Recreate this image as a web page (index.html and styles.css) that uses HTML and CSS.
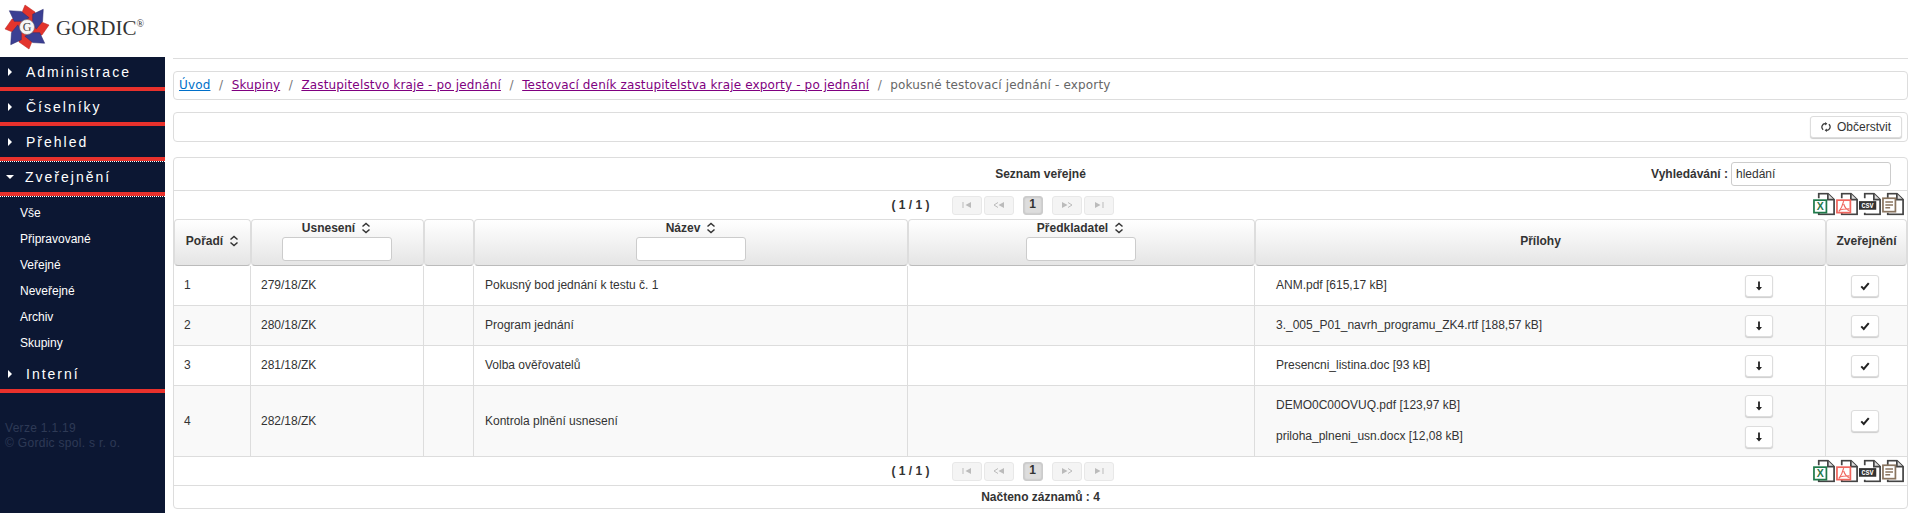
FILE: index.html
```html
<!DOCTYPE html>
<html lang="cs">
<head>
<meta charset="utf-8">
<title>Gordic</title>
<link rel="stylesheet" href="styles.css">
</head>
<body>
<svg class="defs" aria-hidden="true">
  <symbol id="i-sort" viewBox="0 0 10 12"><path d="M1.500 4.500 5 1.500l3.500 3M1.500 7.500 5 10.500l3.500-3" fill="none" stroke="#333" stroke-width="1.500"/></symbol>
  <symbol id="i-refresh" viewBox="0 0 12 12"><path d="M2.600 9.200A4 4 0 0 1 5.500 2.100M9.400 2.800A4 4 0 0 1 6.500 9.900" fill="none" stroke="#333" stroke-width="1.500"/><path d="M5 0 7.600 2.200 5 4.200zM7 12 4.400 9.800 7 7.800z" fill="#333"/></symbol>
  <symbol id="i-down" viewBox="0 0 10 12"><path d="M5 1.500v6" stroke="#222" stroke-width="1.800" fill="none"/><path d="M2 7h6L5 10.500z" fill="#222"/></symbol>
  <symbol id="i-check" viewBox="0 0 12 12"><path d="M1.500 6.500 4.500 9.500 10.500 2.500" stroke="#222" stroke-width="2.400" fill="none"/></symbol>
  <symbol id="i-first" viewBox="0 0 12 8"><path d="M2 1v6" stroke="#bbb" fill="none"/><path d="M10 1v6L4.500 4z" fill="#bbb"/></symbol>
  <symbol id="i-prev" viewBox="0 0 12 8"><path d="M5 1.500 1 4l4 2.500" stroke="#bbb" fill="none"/><path d="M11 1v6L5.500 4z" fill="#bbb"/></symbol>
  <symbol id="i-next" viewBox="0 0 12 8"><path d="M7 1.500 11 4 7 6.500" stroke="#bbb" fill="none"/><path d="M1 1v6L6.500 4z" fill="#bbb"/></symbol>
  <symbol id="i-last" viewBox="0 0 12 8"><path d="M10 1v6" stroke="#bbb" fill="none"/><path d="M2 1v6L7.500 4z" fill="#bbb"/></symbol>
  <symbol id="i-page" viewBox="0 0 24 24"><path d="M6 6V1.200h9.500L22 7.500V22.800H6V21" fill="#fff" stroke="#444" stroke-width="1.800"/><path d="M15.500 1.200V7.500H22" fill="#ddd" stroke="#444" stroke-width="1.800"/></symbol>
</svg>

<header class="top">
  <svg class="logo-mark" viewBox="-24 -24 48 48" aria-hidden="true">
    <path class="arm-red" d="M-2-22 8-15 9-3 0-6-6-12z"/>
    <path class="arm-red" transform="rotate(90)" d="M-2-22 8-15 9-3 0-6-6-12z"/>
    <path class="arm-red" transform="rotate(180)" d="M-2-22 8-15 9-3 0-6-6-12z"/>
    <path class="arm-red" transform="rotate(270)" d="M-2-22 8-15 9-3 0-6-6-12z"/>
    <path class="arm-blue" transform="rotate(45)" d="M-1-24 7-15 8-5 1-7-5-13z"/>
    <path class="arm-blue" transform="rotate(135)" d="M-1-24 7-15 8-5 1-7-5-13z"/>
    <path class="arm-blue" transform="rotate(225)" d="M-1-24 7-15 8-5 1-7-5-13z"/>
    <path class="arm-blue" transform="rotate(315)" d="M-1-24 7-15 8-5 1-7-5-13z"/>
    <circle r="7.500" fill="#f6f6f6" stroke="#777" stroke-width=".6"/>
    <text class="logo-g" y="4" text-anchor="middle">G</text>
  </svg>
  <span class="logo-text">GORDIC<sup>®</sup></span>
</header>

<div class="layout">
  <nav class="side">
    <ul class="menu">
      <li class="menu-item first"><i class="tri"></i>Administrace</li>
      <li class="menu-item"><i class="tri"></i>Číselníky</li>
      <li class="menu-item"><i class="tri"></i>Přehled</li>
      <li class="menu-item dotted"><i class="tri open"></i>Zveřejnění</li>
      <li class="sub dotted">
        <a>Vše</a><a>Připravované</a><a>Veřejné</a><a>Neveřejné</a><a>Archiv</a><a>Skupiny</a>
      </li>
      <li class="menu-item"><i class="tri"></i>Interní</li>
    </ul>
    <p class="version">Verze 1.1.19<br>© Gordic spol. s r. o.</p>
  </nav>

  <main class="content">
    <div class="rule"></div>
    <div class="panel crumbs">
      <a class="new" href="#">Úvod</a><span class="sep">/</span>
      <a href="#">Skupiny</a><span class="sep">/</span>
      <a href="#">Zastupitelstvo kraje - po jednání</a><span class="sep">/</span>
      <a href="#">Testovací deník zastupitelstva kraje exporty - po jednání</a><span class="sep">/</span>
      <span class="current">pokusné testovací jednání - exporty</span>
    </div>
    <div class="panel toolbar">
      <button class="btn refresh"><svg class="ic12"><use href="#i-refresh"/></svg>Občerstvit</button>
    </div>

    <section class="panel grid">
      <div class="title-bar">
        <span></span>
        <strong>Seznam veřejné</strong>
        <label class="search">Vyhledávání :<input class="search-input" value="hledání"></label>
      </div>

      <div class="pager-bar">
        <div class="pager">
          <b class="count">( 1 / 1 )</b>
          <span class="pg"><svg class="pg-ic"><use href="#i-first"/></svg></span>
          <span class="pg"><svg class="pg-ic"><use href="#i-prev"/></svg></span>
          <span class="pg-num">1</span>
          <span class="pg"><svg class="pg-ic"><use href="#i-next"/></svg></span>
          <span class="pg"><svg class="pg-ic"><use href="#i-last"/></svg></span>
        </div>
        <div class="exports">
          <svg class="doc" viewBox="0 0 24 24"><use href="#i-page"/><rect x="1" y="8" width="13" height="13" fill="#fff" stroke="#1f7a4a" stroke-width="1.800"/><text class="doc-x" x="7.500" y="18.500" text-anchor="middle">X</text></svg>
          <svg class="doc" viewBox="0 0 24 24"><use href="#i-page"/><rect x="1" y="8" width="14" height="13" fill="#fff" stroke="#f0665e" stroke-width="1.800"/><path d="M8 9c-1 4-2 7-5 11M8 12c1 3 3 6 6 7M3 19c3-2 6-2 11-2" fill="none" stroke="#f0665e" stroke-width="1.200"/></svg>
          <svg class="doc" viewBox="0 0 24 24"><use href="#i-page"/><rect x="0" y="9" width="18" height="9" fill="#333"/><text class="doc-csv" x="9" y="16" text-anchor="middle">CSV</text></svg>
          <svg class="doc" viewBox="0 0 24 24"><use href="#i-page"/><rect x="1" y="6" width="13" height="14" fill="#fff" stroke="#8a7560" stroke-width="1.800"/><path d="M3.500 10h8M3.500 13h8M3.500 16h5" stroke="#8a7560" stroke-width="1.500" fill="none"/></svg>
        </div>
      </div>

      <table class="data">
        <colgroup>
          <col class="c-ord"><col class="c-res"><col class="c-empty"><col class="c-name"><col class="c-sub"><col class="c-att"><col class="c-pub">
        </colgroup>
        <thead>
          <tr>
            <th>Pořadí<svg class="sort"><use href="#i-sort"/></svg></th>
            <th class="nudge">Usnesení<svg class="sort"><use href="#i-sort"/></svg><input class="filter"></th>
            <th></th>
            <th>Název<svg class="sort"><use href="#i-sort"/></svg><input class="filter"></th>
            <th class="nudge">Předkladatel<svg class="sort"><use href="#i-sort"/></svg><input class="filter"></th>
            <th>Přílohy</th>
            <th>Zveřejnění</th>
          </tr>
        </thead>
        <tbody>
          <tr>
            <td>1</td><td>279/18/ZK</td><td></td><td class="name">Pokusný bod jednání k testu č. 1</td><td></td>
            <td class="att"><div class="file"><span>ANM.pdf [615,17 kB]</span><button class="btn ib"><svg class="ic10"><use href="#i-down"/></svg></button></div></td>
            <td class="pub"><button class="btn cb"><svg class="ic10"><use href="#i-check"/></svg></button></td>
          </tr>
          <tr>
            <td>2</td><td>280/18/ZK</td><td></td><td class="name">Program jednání</td><td></td>
            <td class="att"><div class="file"><span>3._005_P01_navrh_programu_ZK4.rtf [188,57 kB]</span><button class="btn ib"><svg class="ic10"><use href="#i-down"/></svg></button></div></td>
            <td class="pub"><button class="btn cb"><svg class="ic10"><use href="#i-check"/></svg></button></td>
          </tr>
          <tr>
            <td>3</td><td>281/18/ZK</td><td></td><td class="name">Volba ověřovatelů</td><td></td>
            <td class="att"><div class="file"><span>Presencni_listina.doc [93 kB]</span><button class="btn ib"><svg class="ic10"><use href="#i-down"/></svg></button></div></td>
            <td class="pub"><button class="btn cb"><svg class="ic10"><use href="#i-check"/></svg></button></td>
          </tr>
          <tr class="tall">
            <td>4</td><td>282/18/ZK</td><td></td><td class="name">Kontrola plnění usnesení</td><td></td>
            <td class="att">
              <div class="file"><span>DEMO0C00OVUQ.pdf [123,97 kB]</span><button class="btn ib"><svg class="ic10"><use href="#i-down"/></svg></button></div>
              <div class="file"><span>priloha_plneni_usn.docx [12,08 kB]</span><button class="btn ib"><svg class="ic10"><use href="#i-down"/></svg></button></div>
            </td>
            <td class="pub"><button class="btn cb"><svg class="ic10"><use href="#i-check"/></svg></button></td>
          </tr>
        </tbody>
      </table>

      <div class="pager-bar lower">
        <div class="pager">
          <b class="count">( 1 / 1 )</b>
          <span class="pg"><svg class="pg-ic"><use href="#i-first"/></svg></span>
          <span class="pg"><svg class="pg-ic"><use href="#i-prev"/></svg></span>
          <span class="pg-num">1</span>
          <span class="pg"><svg class="pg-ic"><use href="#i-next"/></svg></span>
          <span class="pg"><svg class="pg-ic"><use href="#i-last"/></svg></span>
        </div>
        <div class="exports">
          <svg class="doc" viewBox="0 0 24 24"><use href="#i-page"/><rect x="1" y="8" width="13" height="13" fill="#fff" stroke="#1f7a4a" stroke-width="1.800"/><text class="doc-x" x="7.500" y="18.500" text-anchor="middle">X</text></svg>
          <svg class="doc" viewBox="0 0 24 24"><use href="#i-page"/><rect x="1" y="8" width="14" height="13" fill="#fff" stroke="#f0665e" stroke-width="1.800"/><path d="M8 9c-1 4-2 7-5 11M8 12c1 3 3 6 6 7M3 19c3-2 6-2 11-2" fill="none" stroke="#f0665e" stroke-width="1.200"/></svg>
          <svg class="doc" viewBox="0 0 24 24"><use href="#i-page"/><rect x="0" y="9" width="18" height="9" fill="#333"/><text class="doc-csv" x="9" y="16" text-anchor="middle">CSV</text></svg>
          <svg class="doc" viewBox="0 0 24 24"><use href="#i-page"/><rect x="1" y="6" width="13" height="14" fill="#fff" stroke="#8a7560" stroke-width="1.800"/><path d="M3.500 10h8M3.500 13h8M3.500 16h5" stroke="#8a7560" stroke-width="1.500" fill="none"/></svg>
        </div>
      </div>
      <div class="foot">Načteno záznamů : 4</div>
    </section>
  </main>
</div>
</body>
</html>
```
FILE: styles.css
```css
* { box-sizing: border-box; }
html, body { height: 100%; }
body {
  margin: 0;
  overflow: hidden;
  display: flex;
  flex-direction: column;
  background: #fff;
  color: #333;
  font: 12px/1.2 "Liberation Sans", Arial, sans-serif;
}
.defs { display: none; }

/* header */
.top {
  height: 57px;
  flex: none;
  display: flex;
  align-items: center;
  padding-left: 3px;
}
.logo-mark { width: 48px; height: 48px; margin-top: -3px; }
.arm-red { fill: #e3342c; stroke: #b7231e; stroke-width: .5; }
.arm-blue { fill: #3b3f93; stroke: #2a2c70; stroke-width: .5; }
.logo-g { font: 12px "Liberation Serif", serif; fill: #444; }
.logo-text {
  margin-left: 5px;
  font: 21px "Liberation Serif", serif;
  color: #333;
}
.logo-text sup { font-size: 10px; vertical-align: 8px; line-height: 0; }

/* layout */
.layout { flex: 1; display: flex; min-height: 0; }
.side { width: 165px; flex: none; background: #0c1733; color: #fff; }
.menu { list-style: none; margin: 0; padding: 0; }
.menu-item {
  height: 35px;
  padding-top: 1px;
  line-height: 30px;
  border-bottom: 4px solid #e8312c;
  font-size: 14px;
  letter-spacing: 2px;
  padding-left: 8px;
  display: flex;
  align-items: center;
}
.menu-item.first { height: 34px; padding-top: 0; }
.menu-item:last-child { padding-top: 0; }
.dotted {
  background-image: linear-gradient(to right, #fff 1px, transparent 1px);
  background-size: 2px 1px;
  background-repeat: repeat-x;
}
.tri {
  width: 0; height: 0;
  margin-right: 14px;
  border-left: 4px solid #fff;
  border-top: 4px solid transparent;
  border-bottom: 4px solid transparent;
}
.tri.open {
  margin-right: 11px;
  border-top: 4px solid #fff;
  border-left: 4px solid transparent;
  border-right: 4px solid transparent;
  border-bottom: 0;
  margin-left: -2px;
}
.sub { padding: 4px 0 2px 20px; }
.sub a { display: block; height: 26px; line-height: 26px; color: #fff; }
.version {
  margin: 28px 0 0 5px;
  color: #2e3a56;
  line-height: 15px;
  letter-spacing: .3px;
}

/* content */
.content { flex: 1; min-width: 0; padding: 1px 7px 0 8px; }
.rule { height: 1px; background: #ddd; margin-bottom: 12px; }
.panel { border: 1px solid #ddd; border-radius: 4px; background: #fff; }
.crumbs {
  height: 29px;
  margin-bottom: 12px;
  display: flex;
  align-items: center;
  padding: 0 0 1px 5px;
  font: 12px "DejaVu Sans", sans-serif;
  letter-spacing: .15px;
}
.crumbs a { color: #800080; }
.crumbs a.new { color: #0070c9; }
.sep { margin: 0 8.5px; color: #777; }
.current { color: #666; }
.toolbar {
  height: 30px;
  margin-bottom: 15px;
  display: flex;
  justify-content: flex-end;
  align-items: center;
  padding-right: 5px;
}
.btn {
  border: 1px solid #ddd;
  border-radius: 3px;
  background: #fff;
  box-shadow: 0 1px 1px #ccc;
  padding: 0;
  color: #333;
  font: 12px "Liberation Sans", sans-serif;
  display: inline-flex;
  align-items: center;
  justify-content: center;
}
.refresh { width: 92px; height: 22px; gap: 6px; }
.ic12 { width: 10px; height: 12px; }
.ic10 { width: 10px; height: 12px; }
.ib { width: 28px; height: 22px; }
.cb { width: 28px; height: 22px; margin-right: 3px; }

/* grid */
.grid { height: 352px; }
.title-bar {
  height: 33px;
  display: grid;
  grid-template-columns: 1fr auto 1fr;
  align-items: center;
  border-bottom: 1px solid #ddd;
  font-weight: bold;
}
.search { justify-self: end; display: flex; align-items: center; margin-right: 16px; gap: 3px; }
.search-input {
  width: 160px;
  height: 24px;
  border: 1px solid #ccc;
  border-radius: 3px;
  padding: 0 4px;
  font: 12px "Liberation Sans", sans-serif;
  color: #333;
}
.pager-bar { height: 28px; display: flex; align-items: center; padding-right: 2px; }
.pager-bar.lower { height: 29px; border-bottom: 1px solid #ddd; }
.pager { flex: 1; display: flex; justify-content: center; align-items: center; gap: 2px; padding-left: 18px; }
.count { margin-right: 20px; }
.pg {
  width: 30px; height: 19px;
  background: #f4f4f4;
  border: 1px solid #e8e8e8;
  border-radius: 3px;
  display: flex; align-items: center; justify-content: center;
}
.pg-ic { width: 12px; height: 8px; }
.pg-num {
  width: 20px; height: 19px;
  margin: 0 7px;
  background: #ddd;
  border: 1px solid #ccc;
  border-radius: 3px;
  font-weight: bold;
  text-align: center;
  line-height: 15px;
  box-shadow: inset 0 0 2px #aaa;
}
.exports { display: flex; align-self: flex-start; margin-top: 1px; }
.lower .exports { margin-top: 2px; }
.doc { width: 23px; height: 24px; }
.doc-x { font: bold 11px "Liberation Sans", sans-serif; fill: #1f7a4a; }
.doc-csv { font: bold 7px "Liberation Mono", monospace; fill: #fff; }

.data { width: 100%; table-layout: fixed; border-collapse: separate; border-spacing: 0; }
.c-ord { width: 77px; }
.c-res { width: 173px; }
.c-empty { width: 50px; }
.c-name { width: 434px; }
.c-sub { width: 347px; }
.c-att { width: 571px; }
.data th {
  height: 47px;
  padding: 0 0 3px;
  text-align: center;
  vertical-align: middle;
  background: linear-gradient(#fff, #e5e5e5);
  border: 1px solid #ddd;
  border-bottom-color: #bbb;
  border-radius: 4px;
  line-height: 15px;
}
.data th.nudge { padding-right: 2px; }
.sort { width: 10px; height: 12px; margin-left: 6px; vertical-align: -2px; }
.filter {
  display: block;
  width: 110px;
  height: 24px;
  margin: 1px auto 0;
  border: 1px solid #ccc;
  border-radius: 3px;
  background: #fff;
}
.data td {
  height: 40px;
  padding: 0 0 0 10px;
  border-bottom: 1px solid #ddd;
  border-right: 1px solid #ddd;
  vertical-align: middle;
}
.data td:last-child { border-right: 0; }
.data tbody tr:nth-child(even) td { background: #f9f9f9; }
.data tr.tall td { height: 71px; }
.data td.name { padding-left: 11px; }
.data td.att { padding: 0 52px 0 21px; }
.data td.pub { padding: 0; text-align: center; }
.file { display: flex; justify-content: space-between; align-items: center; height: 31px; }
.foot { height: 22px; line-height: 22px; text-align: center; font-weight: bold; }
```
